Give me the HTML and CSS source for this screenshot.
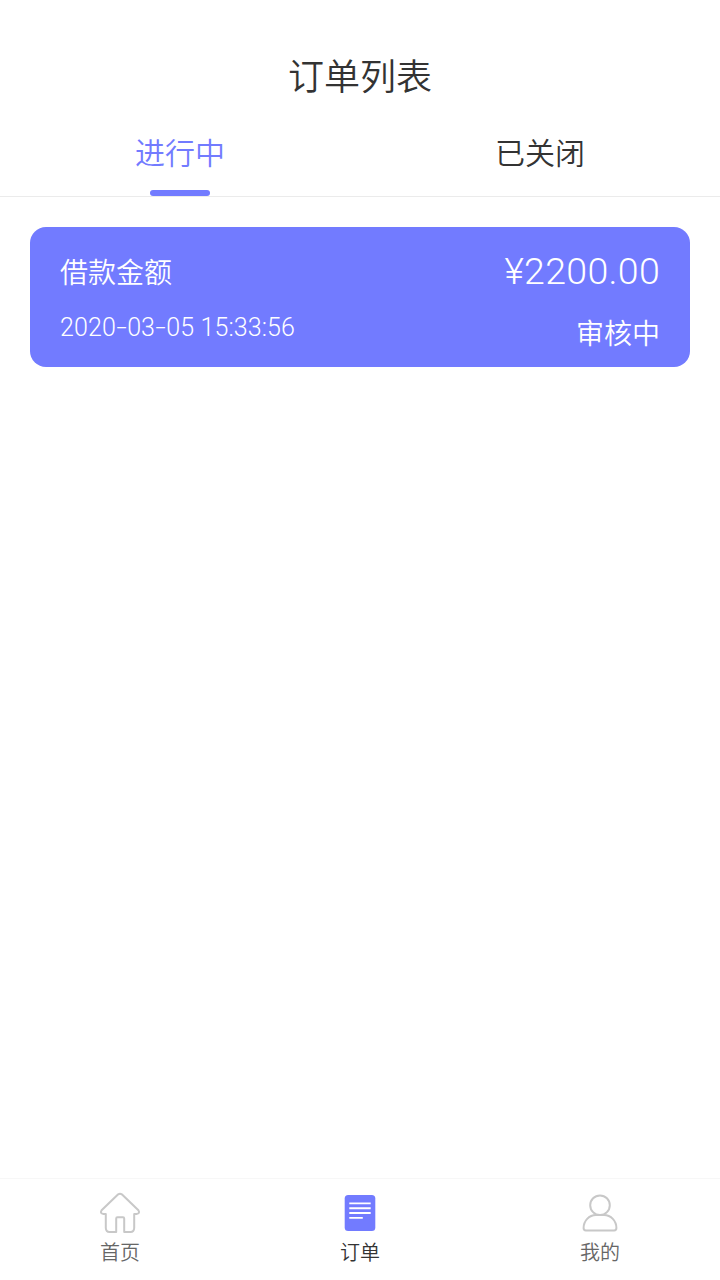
FILE: index.html
```html
<!DOCTYPE html>
<html lang="zh-CN">
<head>
    <meta charset="UTF-8">
    <meta name="viewport" content="width=device-width, initial-scale=1.0">
    <title>订单列表</title>
    <link rel="stylesheet" href="styles.css">
</head>
<body>
    <div class="page">
        <header class="header">
            <h1>订单列表</h1>
        </header>

        <div class="tabs">
            <div class="tab active">进行中</div>
            <div class="tab">已关闭</div>
        </div>

        <main class="list">
            <div class="order">
                <div class="order-left">
                    <span class="order-label">借款金额</span>
                    <span class="order-time">2020<i>-</i>03<i>-</i>05 15:33:56</span>
                </div>
                <div class="order-right">
                    <span class="order-amount">¥2200.00</span>
                    <span class="order-status">审核中</span>
                </div>
            </div>
        </main>

        <nav class="tabbar">
            <a class="tabbar-item">
                <svg width="44" height="44" viewBox="0 0 44 44" fill="none" stroke="#c8c8c8" stroke-width="2" stroke-linejoin="round">
                    <path d="M20.2 3.3Q22 2.2 23.8 3.3L40.4 19.3Q42.4 22.6 38.5 23H36.2V37Q36 41 32.5 41H26.2V27.5Q26.2 26.2 25 26.2H19.4Q18.2 26.2 18.2 27.5V41H11.5Q8 41 7.8 37V23H5.5Q1.6 22.6 3.6 19.3Z"/>
                </svg>
                <span>首页</span>
            </a>
            <a class="tabbar-item active">
                <svg width="44" height="44" viewBox="0 0 44 44">
                    <rect x="6.7" y="4" width="30.6" height="36" rx="3.5" fill="#727bff"/>
                    <path d="M11.3 12.4h21.4M11.3 17.3h21.4M11.3 22h21.4M11.3 26.9h13.5" stroke="#fff" stroke-width="1.9"/>
                </svg>
                <span>订单</span>
            </a>
            <a class="tabbar-item">
                <svg width="44" height="44" viewBox="0 0 44 44" fill="none" stroke="#c8c8c8" stroke-width="2" stroke-linejoin="round">
                    <circle cx="22" cy="14.2" r="9.8"/>
                    <path d="M18 24H26C33 24 38.4 30 38.4 37Q38.4 39.4 36.2 39.4H7.8Q5.6 39.4 5.6 37C5.6 30 11 24 18 24Z"/>
                </svg>
                <span>我的</span>
            </a>
        </nav>
    </div>
</body>
</html>
```

FILE: styles.css
```css
* {
    box-sizing: border-box;
}
body {
    margin: 0;
    background-color: #fff;
    color: #333;
    font-family: "Noto Sans CJK SC", sans-serif;
    font-weight: 350;
}
.page {
    display: flex;
    flex-direction: column;
    height: 1280px;
}
.header {
    height: 110px;
    padding-top: 48px;
    text-align: center;
}
.header h1 {
    margin: 0;
    font-size: 36px;
    font-weight: 350;
    line-height: 52px;
}
/* Tabs */
.tabs {
    display: flex;
    height: 87px;
    border-bottom: 1px solid #ebebeb;
}
.tab {
    flex: 1;
    display: flex;
    flex-direction: column;
    align-items: center;
    justify-content: space-between;
    padding-top: 18px;
    font-size: 30px;
    line-height: 46px;
}
.tab.active {
    color: #727bff;
}
.tab.active::after {
    content: "";
    width: 60px;
    height: 6px;
    border-radius: 3px;
    background-color: #727bff;
}
/* Order list */
.list {
    flex: 1;
    padding: 30px;
}
.order {
    display: flex;
    justify-content: space-between;
    height: 140px;
    padding: 21px 30px;
    border-radius: 16px;
    background-color: #727bff;
    color: #fff;
}
.order-left,
.order-right {
    display: flex;
    flex-direction: column;
}
.order-right {
    align-items: flex-end;
}
.order-label {
    font-size: 28px;
    line-height: 46px;
}
.order-time {
    margin-top: 16px;
    font-family: Roboto, sans-serif;
    font-size: 25px;
    line-height: 36px;
    letter-spacing: 0.1px;
}
.order-time i {
    display: inline-block;
    font-style: normal;
    transform: scaleX(1.5);
    margin: 0 2px;
}
.order-amount {
    font-family: Roboto, sans-serif;
    font-size: 37.5px;
    line-height: 46px;
    letter-spacing: 0.3px;
}
.order-status {
    margin-top: 15px;
    font-size: 28px;
    line-height: 46px;
}
/* Bottom bar */
.tabbar {
    display: flex;
    height: 102px;
    border-top: 1px solid #f7f7f7;
}
.tabbar-item {
    flex: 1;
    display: flex;
    flex-direction: column;
    align-items: center;
    padding-top: 12px;
    color: #666;
    font-size: 20px;
    line-height: 34px;
}
.tabbar-item.active {
    color: #333;
}
```
